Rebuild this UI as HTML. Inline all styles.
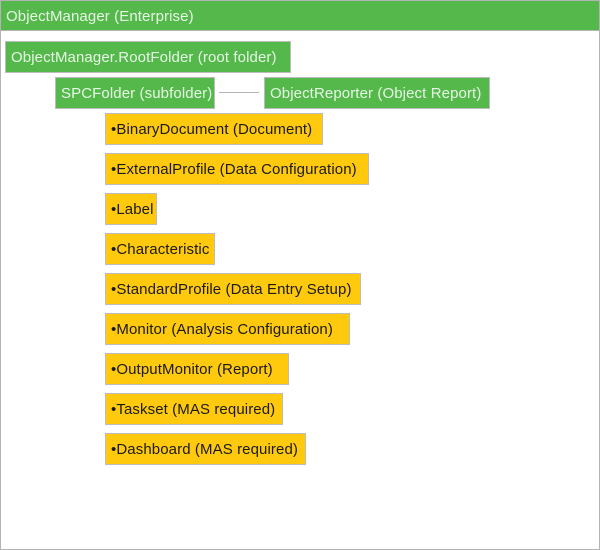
<!DOCTYPE html>
<html><head><style>
*{margin:0;padding:0;box-sizing:border-box}
body{width:600px;height:550px;overflow:hidden;background:#fff;font-family:"Liberation Sans",sans-serif;}
#frame{position:absolute;left:0;top:0;width:600px;height:550px;border:1px solid #b4b4b4;}
.b{position:absolute;height:32px;line-height:32px;font-size:15px;white-space:nowrap;overflow:hidden;padding-left:5px;letter-spacing:0.1px;border:1px solid #bcbcbc}
.g{background:#55b84b;color:#e6f7e6}
.y{background:#ffc90e;color:#1a1a1a}
#hdr{position:absolute;left:1px;top:1px;width:598px;height:30px;background:#55b84b;color:#e6f7e6;font-size:15px;line-height:31px;padding-left:5px;border-bottom:1px solid #b4b4b4;letter-spacing:0.1px}
#ln{position:absolute;left:219px;top:92px;width:40px;height:1px;background:#b4b4b4}
</style></head><body>
<div id="frame"></div>
<div id="hdr">ObjectManager (Enterprise)</div>
<div class="b g" style="left:5px;top:41px;width:286px">ObjectManager.RootFolder (root folder)</div>
<div class="b g" style="left:55px;top:77px;width:160px">SPCFolder (subfolder)</div>
<div id="ln"></div>
<div class="b g" style="left:264px;top:77px;width:226px">ObjectReporter (Object Report)</div>
<div class="b y" style="left:105px;top:113px;width:218px">•BinaryDocument (Document)</div>
<div class="b y" style="left:105px;top:153px;width:264px">•ExternalProfile (Data Configuration)</div>
<div class="b y" style="left:105px;top:193px;width:52px">•Label</div>
<div class="b y" style="left:105px;top:233px;width:110px">•Characteristic</div>
<div class="b y" style="left:105px;top:273px;width:256px">•StandardProfile (Data Entry Setup)</div>
<div class="b y" style="left:105px;top:313px;width:245px">•Monitor (Analysis Configuration)</div>
<div class="b y" style="left:105px;top:353px;width:184px">•OutputMonitor (Report)</div>
<div class="b y" style="left:105px;top:393px;width:178px">•Taskset (MAS required)</div>
<div class="b y" style="left:105px;top:433px;width:201px">•Dashboard (MAS required)</div>
</body></html>
